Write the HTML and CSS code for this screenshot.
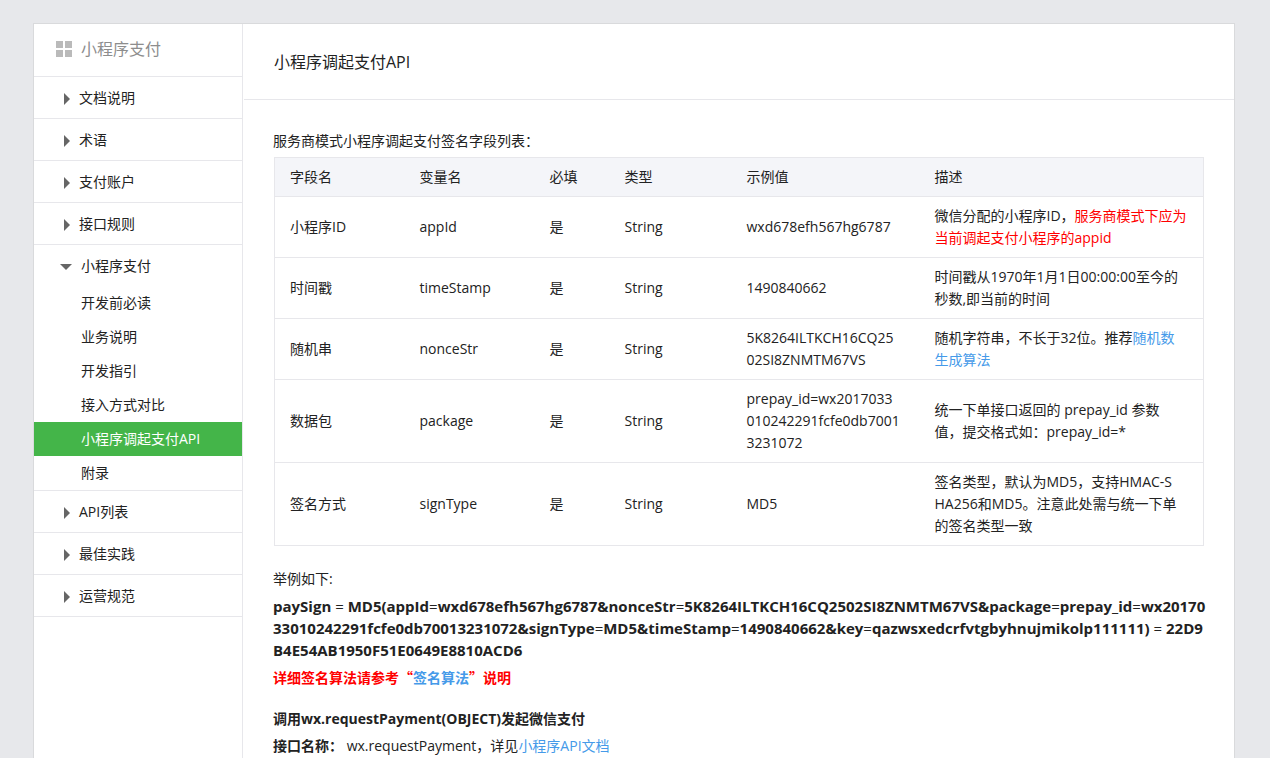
FILE: index.html
```html
<!DOCTYPE html>
<html lang="zh-CN">
<head>
<meta charset="utf-8">
<title>小程序调起支付API</title>
<link rel="stylesheet" href="styles.css">
</head>
<body>
<div class="panel">
  <nav class="sidebar">
    <h2 class="sidebar-title">
      <svg class="grid-icon" viewBox="0 0 16 16" aria-hidden="true"><path d="M0 0h7v7H0zM9 0h7v7H9zM0 9h7v7H0zM9 9h7v7H9z"/></svg>
      <span>小程序支付</span>
    </h2>
    <ul class="menu">
      <li class="menu-item"><a class="menu-link" href="#">文档说明</a></li>
      <li class="menu-item"><a class="menu-link" href="#">术语</a></li>
      <li class="menu-item"><a class="menu-link" href="#">支付账户</a></li>
      <li class="menu-item"><a class="menu-link" href="#">接口规则</a></li>
      <li class="menu-item">
        <a class="menu-link open" href="#">小程序支付</a>
        <ul class="submenu">
          <li><a class="sub-link" href="#">开发前必读</a></li>
          <li><a class="sub-link" href="#">业务说明</a></li>
          <li><a class="sub-link" href="#">开发指引</a></li>
          <li><a class="sub-link" href="#">接入方式对比</a></li>
          <li><a class="sub-link current" href="#">小程序调起支付API</a></li>
          <li><a class="sub-link" href="#">附录</a></li>
        </ul>
      </li>
      <li class="menu-item"><a class="menu-link" href="#">API列表</a></li>
      <li class="menu-item"><a class="menu-link" href="#">最佳实践</a></li>
      <li class="menu-item"><a class="menu-link" href="#">运营规范</a></li>
    </ul>
  </nav>
  <main class="content">
    <h1 class="content-title">小程序调起支付API</h1>
    <div class="article">
      <p>服务商模式小程序调起支付签名字段列表：</p>
      <table class="fields">
        <colgroup><col class="col-name"><col class="col-var"><col class="col-req"><col class="col-type"><col class="col-example"><col></colgroup>
        <thead>
          <tr><th>字段名</th><th>变量名</th><th>必填</th><th>类型</th><th>示例值</th><th>描述</th></tr>
        </thead>
        <tbody>
          <tr><td>小程序ID</td><td>appId</td><td>是</td><td>String</td><td>wxd678efh567hg6787</td><td>微信分配的小程序ID，<span class="warn">服务商模式下应为当前调起支付小程序的appid</span></td></tr>
          <tr><td>时间戳</td><td>timeStamp</td><td>是</td><td>String</td><td>1490840662</td><td>时间戳从1970年1月1日00:00:00至今的<br>秒数,即当前的时间</td></tr>
          <tr><td>随机串</td><td>nonceStr</td><td>是</td><td>String</td><td>5K8264ILTKCH16CQ25<br>02SI8ZNMTM67VS</td><td>随机字符串，不长于32位。推荐<a href="#">随机数<br>生成算法</a></td></tr>
          <tr><td>数据包</td><td>package</td><td>是</td><td>String</td><td>prepay_id=wx2017033<br>010242291fcfe0db7001<br>3231072</td><td>统一下单接口返回的 prepay_id 参数<br>值，提交格式如：prepay_id=*</td></tr>
          <tr><td>签名方式</td><td>signType</td><td>是</td><td>String</td><td>MD5</td><td>签名类型，默认为MD5，支持HMAC-S<br>HA256和MD5。注意此处需与统一下单<br>的签名类型一致</td></tr>
        </tbody>
      </table>
      <p>举例如下:</p>
      <p class="sign-example"><strong>paySign <span class="op">=</span> MD5(appId<span class="op">=</span>wxd678efh567hg6787&amp;nonceStr<span class="op">=</span>5K8264ILTKCH16CQ2502SI8ZNMTM67VS&amp;package<span class="op">=</span>prepay_id<span class="op">=</span>wx20170<br>33010242291fcfe0db70013231072&amp;signType<span class="op">=</span>MD5&amp;timeStamp<span class="op">=</span>1490840662&amp;key<span class="op">=</span>qazwsxedcrfvtgbyhnujmikolp111111) <span class="op">=</span> 22D9<br>B4E54AB1950F51E0649E8810ACD6</strong></p>
      <p><strong class="warn cjk">详细签名算法请参考“<a href="#">签名算法</a>”说明</strong></p>
      <h3 class="section-title">调用wx.requestPayment(OBJECT)发起微信支付</h3>
      <p><strong>接口名称：</strong> wx.requestPayment，详见<a href="#">小程序API文档</a></p>
    </div>
  </main>
</div>
</body>
</html>
```
FILE: styles.css
```css
* { box-sizing: border-box; }

body {
  display: flex;
  min-height: 100vh;
  margin: 0;
  padding: 23px 35px 0 33px;
  background: #e7e8eb;
  color: #222;
  font: 14px/22px "Open Sans", "Noto Sans CJK SC", sans-serif;
}

h1, h2, h3, p, ul { margin: 0; padding: 0; }
ul { list-style: none; }
a { color: #459ae9; text-decoration: none; }

.panel {
  display: flex;
  flex: 1;
  min-width: 0;
  border: 1px solid #d9dadc;
  border-bottom: 0;
  background: #fff;
}

.sidebar {
  flex: none;
  width: 209px;
  border-right: 1px solid #e7e7eb;
}

.sidebar-title {
  display: flex;
  align-items: center;
  gap: 9px;
  height: 53px;
  padding: 0 0 2px 22px;
  border-bottom: 1px solid #e7e7eb;
  color: #8d8d8d;
  font-size: 16px;
  font-weight: 400;
}

.grid-icon { width: 16px; height: 16px; fill: #bababa; }

.menu-item { border-bottom: 1px solid #e7e7eb; }

.menu-link {
  display: flex;
  align-items: center;
  gap: 9px;
  height: 41px;
  padding-left: 30px;
  color: #222;
}

.menu-link::before {
  content: "";
  margin-top: 2px;
  border: solid transparent;
  border-width: 6px 0 6px 6px;
  border-left-color: #666;
}

.menu-link.open { padding-left: 26px; }

.menu-link.open::before {
  border-width: 6px 6px 0;
  border-color: #666 transparent;
}

.sub-link {
  display: block;
  padding-left: 47px;
  color: #222;
  line-height: 34px;
}

.sub-link.current { background: #44b549; color: #fff; }

.content { flex: 1; min-width: 0; }

.content-title {
  margin-left: 1px;
  padding: 27px 30px 26px;
  border-bottom: 1px solid #e7e7eb;
  font-size: 16px;
  font-weight: 400;
}

.article { padding: 30px 30px 0; }
.article p { margin-bottom: 5px; word-break: break-all; }

.fields {
  width: calc(100% - 1px);
  margin: 0 0 22px 1px;
  border: 1px solid #e7e7eb;
  border-collapse: collapse;
  table-layout: fixed;
}

.fields th { background: #f4f5f9; font-weight: 400; }

.fields th,
.fields td {
  padding: 8px 15px;
  border-bottom: 1px solid #e7e7eb;
  text-align: left;
  word-break: break-all;
}

.col-name, .col-var { width: 130px; }
.col-req { width: 75px; }
.col-type { width: 122px; }
.col-example { width: 188px; }

.warn { color: #f00; }

.cjk {
  font-family: "Noto Sans CJK SC", sans-serif;
  vertical-align: top;
}

.sign-example { font-size: 15px; white-space: nowrap; }
.op { font-weight: 400; }

.section-title {
  margin: 20px 0 5px;
  font-size: 14px;
  font-weight: 700;
}
```
